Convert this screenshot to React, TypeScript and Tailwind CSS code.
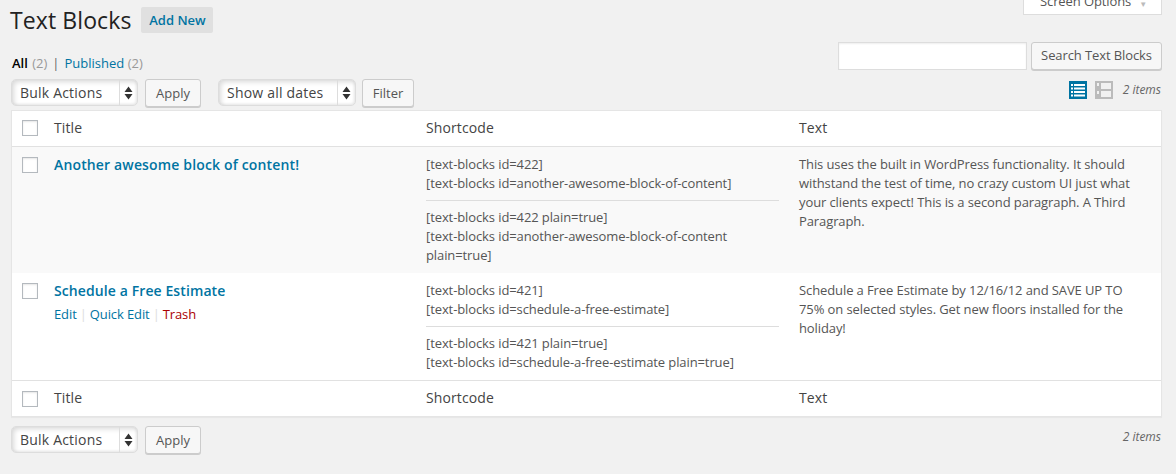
const font = "font-['Open_Sans',sans-serif]";

function Sort() {
  return (
    <svg width="9" height="14" viewBox="0 0 9 14" className="text-[#333]">
      <path d="M4.5 0.5 L8.5 6 H0.5 Z M4.5 13.5 L0.5 8 H8.5 Z" fill="currentColor" />
    </svg>
  );
}

function FakeSelect({ label, width }: { label: string; width: string }) {
  return (
    <div className={`flex h-[27px] ${width} rounded-[5px] border border-[#ddd] bg-white text-[14px] text-[#444] shadow-[inset_2px_2px_5px_rgba(0,0,0,0.15),inset_-1px_-1px_3px_rgba(0,0,0,0.08)]`}>
      <span className="flex-1 pl-[8px] leading-[25px] tracking-[0.2px]">{label}</span>
      <span className="flex w-[18px] items-center justify-center border-l border-[#ddd]">
        <Sort />
      </span>
    </div>
  );
}

function Btn({ children, className = "" }: { children: string; className?: string }) {
  return (
    <button className={`h-[28px] rounded-[3px] border border-[#ccc] bg-[#f7f7f7] text-[13px] text-[#555] shadow-[0_1px_0_#ccc] ${className}`}>
      {children}
    </button>
  );
}

function Check() {
  return <span className="block h-[16px] w-[16px] border border-[#b4b9be] bg-white shadow-[inset_0_1px_2px_rgba(0,0,0,0.1)]" />;
}

function HeadRow({ border, checkClass }: { border: string; checkClass: string }) {
  return (
    <div className={`grid h-[36px] grid-cols-[42px_372px_373px_1fr] items-center text-[14px] tracking-[0.1px] text-[#444] ${border}`}>
      <span className={`pl-[10px] ${checkClass}`}><Check /></span>
      <span className="pb-[2px]">Title</span>
      <span className="pb-[2px]">Shortcode</span>
      <span className="pb-[2px]">Text</span>
    </div>
  );
}

function Codes({ a, b }: { a: string[]; b: string[] }) {
  return (
    <div className="pr-[20px]">
      {a.map((l) => <p key={l}>{l}</p>)}
      <hr className="mt-[7px] mb-[7px] border-[#ddd]" />
      {b.map((l) => <p key={l}>{l}</p>)}
    </div>
  );
}

export default function App() {
  return (
    <div className={`${font} h-[474px] overflow-hidden bg-[#f1f1f1] pl-[11px] pr-[14px]`}>
      <div className="flex h-[42px] items-start justify-between">
        <div className="flex items-center pt-[7px]">
          <h1 className="-ml-px text-[23px] leading-[26px] tracking-[0.1px] text-[#222]">Text Blocks</h1>
          <a className="ml-[10px] h-[26px] w-[72px] rounded-[2px] bg-[#e0e0e0] text-center text-[13px] leading-[26px] font-semibold text-[#0074a2]">Add New</a>
        </div>
        <div className="flex h-[15px] w-[139px] items-end justify-center gap-[8px] overflow-hidden border border-t-0 border-[#ddd] bg-white pb-[4px] pl-[2px] text-[13px] leading-[18px] tracking-[-0.1px] text-[#555]">
          <span>Screen Options</span>
          <span className="mb-[1px] text-[8px] leading-[10px] text-[#bbb]">▼</span>
        </div>
      </div>

      <div className="flex h-[37px] justify-between">
        <p className="pt-[12px] pl-px text-[13px] leading-[18px] text-[#666]">
          <b className="font-semibold text-black">All</b> <span className="ml-px text-[#999]">(2)</span>
          <span className="mx-[5px] text-[#666]">|</span>
          <a className="text-[#0074a2]">Published</a> <span className="text-[#999]">(2)</span>
        </p>
        <div className="flex gap-[4px]">
          <div className="h-[28px] w-[189px] border border-[#ddd] bg-white shadow-[inset_0_1px_2px_rgba(0,0,0,0.07)]" />
          <Btn className="w-[131px] tracking-[-0.1px]">Search Text Blocks</Btn>
        </div>
      </div>

      <div className="flex h-[31px] items-start justify-between">
        <div className="flex">
          <FakeSelect label="Bulk Actions" width="w-[127px]" />
          <Btn className="ml-[7px] w-[56px] pt-[2px]">Apply</Btn>
          <FakeSelect label="Show all dates" width="ml-[17px] w-[138px]" />
          <Btn className="ml-[6px] w-[52px] pt-[2px]">Filter</Btn>
        </div>
        <div className="flex items-center pt-[2px] pr-px">
          <svg width="18" height="18" viewBox="0 0 18 18">
            <rect width="18" height="18" fill="#0074a2" />
            <path d="M2 3h2v2H2zM5 3h11v2H5zM2 6.5h2v2H2zM5 6.5h11v2H5zM2 10h2v2H2zM5 10h11v2H5zM2 13.5h2v2H2zM5 13.5h11v2H5z" fill="#fff" />
          </svg>
          <svg width="18" height="18" viewBox="0 0 18 18" className="ml-[8px]">
            <rect width="18" height="18" fill="#bbb" />
            <path d="M2 2h2v3H2zM2 10h2v3H2zM6 2h10v6H6zM6 10h10v6H6z" fill="#f1f1f1" />
          </svg>
          <i className="ml-[10px] text-[12px] text-[#666]">2 items</i>
        </div>
      </div>

      <div className="border border-[#e5e5e5] bg-white text-[13px] leading-[19px] tracking-[-0.1px] text-[#555] shadow-[0_1px_1px_rgba(0,0,0,0.04)]">
        <HeadRow border="border-b border-[#e1e1e1]" checkClass="pb-[2px]" />
        <div className="grid h-[126px] grid-cols-[42px_372px_373px_1fr] bg-[#f9f9f9] pt-[8px]">
          <span className="pl-[10px] pt-[2px]"><Check /></span>
          <a className="text-[14px] leading-[20px] font-semibold tracking-[0.15px] text-[#0074a2]">Another awesome block of content!</a>
          <Codes
            a={["[text-blocks id=422]", "[text-blocks id=another-awesome-block-of-content]"]}
            b={["[text-blocks id=422 plain=true]", "[text-blocks id=another-awesome-block-of-content plain=true]"]}
          />
          <p className="pr-[20px]">This uses the built in WordPress functionality. It should withstand the test of time, no crazy custom UI just what your clients expect! This is a second paragraph. A Third Paragraph.</p>
        </div>
        <div className="grid h-[107px] grid-cols-[42px_372px_373px_1fr] pt-[8px]">
          <span className="pl-[10px] pt-[2px]"><Check /></span>
          <div>
            <a className="block text-[14px] leading-[20px] font-semibold tracking-[0.1px] text-[#0074a2]">Schedule a Free Estimate</a>
            <p className="mt-[4px] text-[13px] text-[#ddd]">
              <a className="text-[#0074a2]">Edit</a>
              <span className="mx-[3px]">|</span>
              <a className="text-[#0074a2]">Quick Edit</a>
              <span className="mx-[3px]">|</span>
              <a className="text-[#a00]">Trash</a>
            </p>
          </div>
          <Codes
            a={["[text-blocks id=421]", "[text-blocks id=schedule-a-free-estimate]"]}
            b={["[text-blocks id=421 plain=true]", "[text-blocks id=schedule-a-free-estimate plain=true]"]}
          />
          <p className="pr-[20px]">Schedule a Free Estimate by 12/16/12 and SAVE UP TO 75% on selected styles. Get new floors installed for the holiday!</p>
        </div>
        <HeadRow border="border-t border-[#e1e1e1]" checkClass="" />
      </div>

      <div className="flex items-start justify-between pt-[9px]">
        <div className="flex">
          <FakeSelect label="Bulk Actions" width="w-[127px]" />
          <Btn className="ml-[7px] w-[56px] pt-[2px]">Apply</Btn>
        </div>
        <i className="pt-[2px] pr-px text-[12px] text-[#666]">2 items</i>
      </div>
    </div>
  );
}
